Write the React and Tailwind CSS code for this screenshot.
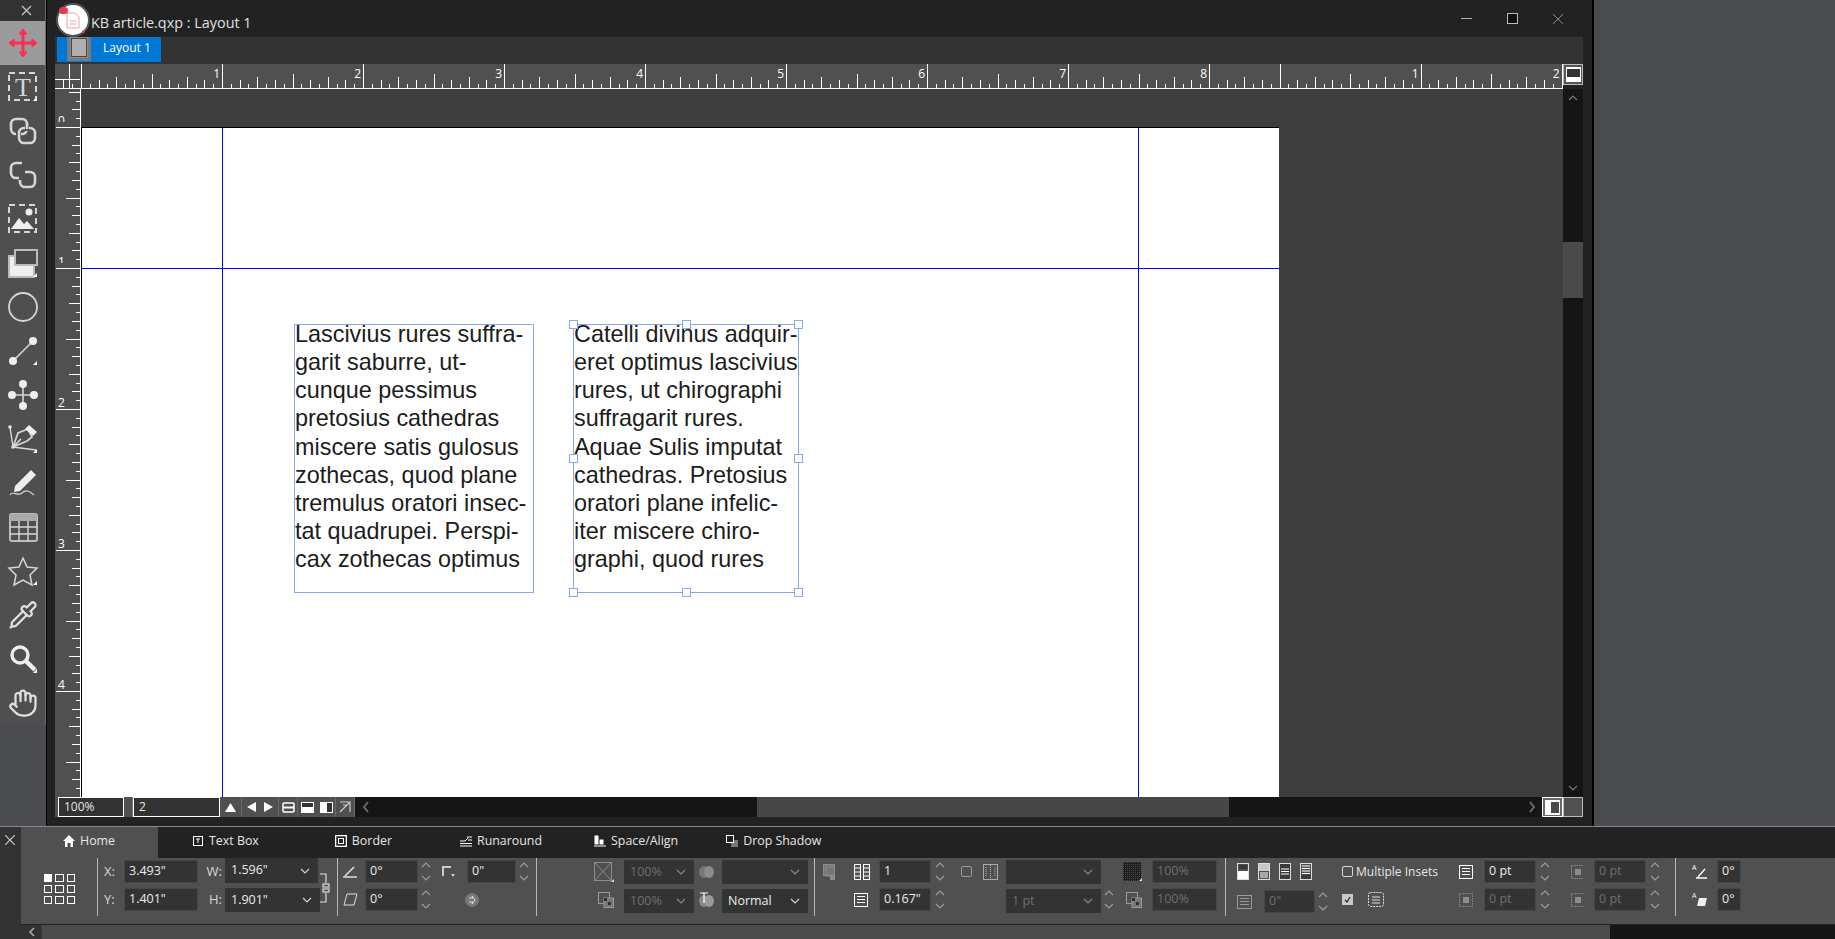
import React from 'react';
import { Hand, Pipette } from 'lucide-react';

const PX = 141;
const sub = (i) => {
    if (i % 16 === 0) return 24;
    if (i % 8 === 0) return 14;
    if (i % 4 === 0) return 11;
    if (i % 2 === 0) return 8;
    return 4;
};

const HRuler = () => {
    const ticks = [];
    for (let i = -2; i < 136; i++) ticks.push({ x: 26 + (i * PX) / 16, h: sub(i) });
    for (let i = 0; i < 36; i++) ticks.push({ x: 26 + 8.5 * PX + (i * PX) / 16, h: i === 0 ? 24 : sub(i) });
    const labels = [];
    for (let i = 1; i <= 8; i++) labels.push({ x: 26 + i * PX - 2, t: i });
    labels.push({ x: 26 + 9.5 * PX - 2, t: 1 }, { x: 26 + 10.5 * PX - 2, t: 2 });
    return (
        <svg width="1508" height="25" className="block">
            {ticks.map((t, i) => (
                <rect key={i} x={Math.round(t.x)} y={24 - t.h} width="1" height={t.h} fill="#fff" />
            ))}
            <rect x="14" y="0" width="1" height="24" fill="#fff" />
            <rect x="0" y="15" width="25" height="1" fill="#fff" />
            <rect x="0" y="24" width="1508" height="1" fill="#fff" />
            {labels.map((l, i) => (
                <text key={i} x={l.x} y="14" textAnchor="end" fontSize="12" fill="#fff" fontFamily="Open Sans, sans-serif">{l.t}</text>
            ))}
        </svg>
    );
};

const VRuler = () => {
    const ticks = [];
    for (let i = -4; i < 82; i++) ticks.push({ y: 38 + (i * PX) / 16, h: sub(i) });
    return (
        <svg width="26" height="708" className="block">
            {ticks.map((t, i) => (
                <rect key={i} x={25 - t.h} y={Math.round(t.y)} width={t.h} height="1" fill="#fff" />
            ))}
            <rect x="25" y="0" width="1" height="708" fill="#fff" />
            {[0, 1].map((n) => (
                <svg key={n} x="2" y={27 + n * PX} width="10" height="6">
                    <text x="1" y="9" fontSize="12" fill="#fff" fontFamily="Open Sans, sans-serif">{n}</text>
                </svg>
            ))}
            {[2, 3, 4].map((n) => (
                <text key={n} x="3" y={36 + n * PX} fontSize="12" fill="#fff" fontFamily="Open Sans, sans-serif">{n}</text>
            ))}
        </svg>
    );
};

const Corner = () => <polygon points="30,26 30,30 26,30" fill="#fff" stroke="none" />;

const S = ({ children }) => (
    <svg width="32" height="32" viewBox="0 0 32 32" fill="none" stroke="#d6d6d6" strokeWidth="2">{children}</svg>
);

const tools = [
    <S key="move">
        <g stroke="#ff2b55" fill="#ff2b55">
            <path d="M16 5V27M5 16H27" strokeWidth="3" />
            <path d="M16 2l4 5h-8zM16 30l4-5h-8zM2 16l5-4v8zM30 16l-5-4v8z" strokeWidth="1" />
        </g>
    </S>,
    <S key="text">
        <rect x="2" y="2" width="27" height="27" strokeDasharray="6 4" />
        <text x="16" y="25" textAnchor="middle" fontSize="26" fill="#d6d6d6" stroke="none" fontFamily="Liberation Serif, serif">T</text>
        <Corner />
    </S>,
    <S key="link">
        <g strokeWidth="2.6">
            <rect x="4" y="4" width="16" height="15" rx="5" />
            <path d="M9 19h5" stroke="#4f4f4f" strokeWidth="4" />
            <rect x="12" y="13" width="16" height="15" rx="5" />
            <path d="M20 10v6" stroke="#4f4f4f" strokeWidth="4" />
            <path d="M20 9v5" />
        </g>
    </S>,
    <S key="unlink">
        <g strokeWidth="2.6">
            <path d="M15 4H9a5 5 0 0 0-5 5v5a5 5 0 0 0 5 5h3" />
            <path d="M18 13h5a5 5 0 0 1 5 5v5a5 5 0 0 1-5 5h-5a5 5 0 0 1-5-5v-2" />
        </g>
    </S>,
    <S key="pic">
        <rect x="2" y="2" width="27" height="27" strokeDasharray="6 4" />
        <path d="M4 26l8-11 5 6 3-3 7 8z" fill="#eee" stroke="none" />
        <circle cx="22" cy="9" r="3.5" fill="#eee" stroke="none" />
    </S>,
    <S key="rect">
        <rect x="2" y="9" width="25" height="21" fill="#efefef" stroke="#bbb" />
        <rect x="8" y="3" width="22" height="15" fill="#4a4a4a" stroke="#bbb" />
        <Corner />
    </S>,
    <S key="circle">
        <circle cx="16" cy="16" r="14" strokeWidth="1.8" />
    </S>,
    <S key="line">
        <path d="M7 25L25 7" strokeWidth="1.6" />
        <circle cx="6" cy="26" r="4" fill="#eee" stroke="none" />
        <circle cx="26" cy="6" r="4" fill="#eee" stroke="none" />
        <Corner />
    </S>,
    <S key="node">
        <path d="M16 5V27M5 16H27" strokeWidth="1.6" />
        {[[16, 5], [16, 27], [5, 16], [27, 16]].map(([x, y], i) => (
            <circle key={i} cx={x} cy={y} r="4" fill="#eee" stroke="none" />
        ))}
    </S>,
    <S key="pen">
        <path d="M3 4l3 20 23 3" strokeWidth="1.4" />
        <circle cx="3" cy="4" r="1.8" fill="#eee" stroke="none" />
        <circle cx="6" cy="24" r="1.8" fill="#eee" stroke="none" />
        <path d="M6 24l5-14 10-4 4 8-5 4zM6 24l8-8" strokeWidth="1.7" />
        <path d="M22 2l8 7-4 4-8-7z" fill="#eee" stroke="none" />
        <Corner />
    </S>,
    <S key="pencil">
        <path d="M8 19L24 3l5 5-16 16-6 1z" fill="#eee" stroke="none" />
        <path d="M3 28c2-5 8 2 12-2s7-2 12 2" strokeWidth="1.2" />
    </S>,
    <S key="table">
        <rect x="3" y="3" width="27" height="27" rx="2" stroke="#bbb" />
        <rect x="3" y="3" width="27" height="7" fill="#aaa" stroke="none" />
        <path d="M3 16H30M3 23H30M12 10V30M21 10V30" strokeWidth="1.4" />
    </S>,
    <S key="star">
        <polygon points="16,3 20,12 30,13 23,20 25,30 16,25 7,30 9,20 2,13 12,12" strokeWidth="1.5" />
        <Corner />
    </S>,
    <Pipette key="pipette" size={30} color="#e0e0e0" strokeWidth={1.8} />,
    <S key="zoom">
        <circle cx="13" cy="12" r="8" strokeWidth="3.4" stroke="#eee" />
        <path d="M19 18l9 9" strokeWidth="4.5" stroke="#eee" />
        <Corner />
    </S>,
    <Hand key="hand" size={30} color="#e0e0e0" strokeWidth={1.8} />,
];

const Toolbar = () => (
    <div className="w-[46px] h-[725px] shrink-0 bg-[#4f4f4f] border-r border-[#6e6e6e] flex flex-col">
        <div className="h-[21px] bg-[#333333] flex justify-end items-center pr-[13px]">
            <svg width="11" height="11" stroke="#c8c8c8" strokeWidth="1.2"><path d="M1 1L10 10M10 1L1 10" /></svg>
        </div>
        {tools.map((t, i) => (
            <div key={i} className={`h-[44.2px] flex items-center justify-center ${i === 0 ? 'bg-[#9b9b9b]' : ''}`}>{t}</div>
        ))}
    </div>
);

const AppIcon = () => (
    <div className="absolute left-[56px] top-[3px] w-[34px] h-[34px] rounded-full bg-white border-2 border-[#555555] flex items-center justify-center">
        <svg width="14" height="17" fill="none" stroke="#f39aa8" strokeWidth="1"><path d="M1 1h8l4 4v11H1z" /><path d="M4 9h6M4 12h6" /></svg>
        <div className="absolute left-[1px] top-[2px] w-[9px] h-[7px] rounded-full bg-[#e8394f]" />
        <div className="absolute right-[3px] bottom-[2px] w-[3px] h-[3px] rounded-full bg-[#e8394f]" />
    </div>
);

const lines1 = ['Lascivius rures suffra-', 'garit saburre, ut-', 'cunque pessimus', 'pretosius cathedras', 'miscere satis gulosus', 'zothecas, quod plane', 'tremulus oratori insec-', 'tat quadrupei. Perspi-', 'cax zothecas optimus'];
const lines2 = ['Catelli divinus adquir-', 'eret optimus lascivius', 'rures, ut chirographi', 'suffragarit rures.', 'Aquae Sulis imputat', 'cathedras. Pretosius', 'oratori plane infelic-', 'iter miscere chiro-', 'graphi, quod rures'];

const TextFrame = ({ className, lines, handles }) => (
    <div className={`absolute top-[196px] h-[269px] border border-[#84a9ef] font-['Liberation_Sans',Arial,sans-serif] text-[#1c1c1c] text-[23.4px] leading-[28.15px] whitespace-nowrap ${className}`}>
        <div className="-mt-[5px]">
            {lines.map((l) => <div key={l}>{l}</div>)}
        </div>
        {handles && (
            <>
                <div className="absolute -left-[5px] -top-[5px] w-[9px] h-[9px] bg-white border border-[#84a9ef]" />
                <div className="absolute left-[108px] -top-[5px] w-[9px] h-[9px] bg-white border border-[#84a9ef]" />
                <div className="absolute -right-[5px] -top-[5px] w-[9px] h-[9px] bg-white border border-[#84a9ef]" />
                <div className="absolute -left-[5px] top-[129px] w-[9px] h-[9px] bg-white border border-[#84a9ef]" />
                <div className="absolute -right-[5px] top-[129px] w-[9px] h-[9px] bg-white border border-[#84a9ef]" />
                <div className="absolute -left-[5px] -bottom-[5px] w-[9px] h-[9px] bg-white border border-[#84a9ef]" />
                <div className="absolute left-[108px] -bottom-[5px] w-[9px] h-[9px] bg-white border border-[#84a9ef]" />
                <div className="absolute -right-[5px] -bottom-[5px] w-[9px] h-[9px] bg-white border border-[#84a9ef]" />
            </>
        )}
    </div>
);

const BarBtn = ({ children, className }) => (
    <div className={`h-[20px] bg-[#505050] flex items-center justify-center border-r border-[#6a6a6a] ${className}`}>{children}</div>
);

const BottomBar = () => (
    <div className="h-[20px] flex items-stretch">
        <div className="w-[3px] bg-[#505050]" />
        <div className="w-[66px] bg-[#333333] border border-white text-[#e8e8e8] text-[12px] leading-[18px] pl-[5px]">100%</div>
        <div className="w-[9px] bg-[#505050] border-r border-[#777]" />
        <div className="w-[87px] bg-[#333333] border border-white text-[#e8e8e8] text-[12px] leading-[18px] pl-[5px]">2</div>
        <BarBtn className="w-[22px]"><svg width="11" height="10" fill="#fff"><path d="M5.5 1L11 10H0z" /></svg></BarBtn>
        <BarBtn className="w-[37px] gap-[8px]">
            <svg width="9" height="10" fill="#fff"><path d="M0 5L9 0v10z" /></svg>
            <svg width="9" height="10" fill="#fff"><path d="M9 5L0 0v10z" /></svg>
        </BarBtn>
        <BarBtn className="w-[19px]">
            <svg width="13" height="11" fill="none" stroke="#fff" strokeWidth="1.5"><rect x="1" y="1" width="11" height="9" rx="1" /><path d="M1 5.5H12" strokeWidth="2" /></svg>
        </BarBtn>
        <BarBtn className="w-[38px] gap-[6px]">
            <svg width="13" height="11"><rect x="0.5" y="0.5" width="12" height="10" fill="#333" stroke="#fff" /><rect y="5" width="13" height="6" fill="#fff" /></svg>
            <svg width="13" height="11"><rect x="0.5" y="0.5" width="12" height="10" fill="#333" stroke="#fff" /><rect width="7" height="11" fill="#fff" /></svg>
        </BarBtn>
        <BarBtn className="w-[19px]">
            <svg width="12" height="12" fill="none" stroke="#ccc" strokeWidth="1.2"><path d="M1 1H11V11M11 1L1 11M4 4H8" /></svg>
        </BarBtn>
        <div className="w-[22px] bg-[#151515] flex items-center justify-center">
            <svg width="8" height="12" fill="none" stroke="#6a6a6a" strokeWidth="2"><path d="M6 1L2 6l4 5" /></svg>
        </div>
        <div className="w-[380px] bg-[#151515]" />
        <div className="w-[472px] bg-[#474747]" />
        <div className="flex-1 bg-[#151515] flex items-center justify-end pr-[6px]">
            <svg width="8" height="12" fill="none" stroke="#6a6a6a" strokeWidth="2"><path d="M2 1L6 6l-4 5" /></svg>
        </div>
        <div className="w-[21px] bg-[#6a6a6a] border border-white flex items-center justify-center">
            <svg width="15" height="15"><rect width="15" height="15" fill="#fff" /><rect x="6" y="2" width="8" height="11" fill="#4a4a4a" /></svg>
        </div>
        <div className="w-[20px] bg-[#505050] border border-[#bbb]" />
    </div>
);

const Chev = ({ up, color = '#9c9c9c', w = 10 }) => (
    <svg width={w} height="6" fill="none" stroke={color} strokeWidth="1.2">
        <path d={up ? `M1 5L${w / 2} 1L${w - 1} 5` : `M1 1L${w / 2} 5L${w - 1} 1`} />
    </svg>
);

const Field = ({ w, v, off }) => (
    <div className={`${w} h-[23px] bg-[#333333] border border-[#474747] px-[4px] leading-[20px] text-[12.5px] truncate ${off ? 'text-[#6f6f6f]' : 'text-[#ececec]'}`}>{v}</div>
);

const Drop = ({ w, v, off, className = 'h-[24px]' }) => (
    <div className={`${w} ${className} bg-[#333333] pl-[6px] pr-[8px] flex items-center justify-between text-[12.5px] ${off ? 'text-[#6f6f6f]' : 'text-[#ececec]'}`}>
        <span>{v}</span>
        <Chev color={off ? '#888' : '#d0d0d0'} />
    </div>
);

const Spin = () => (
    <div className="h-[23px] flex flex-col justify-between items-center py-[2px]">
        <Chev up />
        <Chev />
    </div>
);

const Divider = ({ ml }) => <div className={`w-px h-[58px] -mt-[2px] bg-[#b8b8b8] shrink-0 ${ml}`} />;

const Col = ({ className, children }) => (
    <div className={`flex flex-col gap-[5px] shrink-0 ${className}`}>{children}</div>
);

const Cell = ({ children, className = '' }) => (
    <div className={`h-[23px] flex items-center ${className}`}>{children}</div>
);

const Doc = ({ stroke = '#ddd', w = 15, h = 15, children }) => (
    <svg width={w} height={h} fill="none" stroke={stroke} strokeWidth="1">{children}</svg>
);

const Overlap = () => (
    <Doc w={16} h={16} stroke="#999">
        <rect x="0.5" y="0.5" width="11" height="11" />
        <rect x="6" y="6" width="9.5" height="9.5" fill="#777" />
        <rect x="6" y="6" width="3" height="3" fill="#333" stroke="none" />
        <rect x="10" y="10" width="3" height="3" fill="#333" stroke="none" />
    </Doc>
);

const InsetIcon = ({ c = '#8c8c8c' }) => (
    <Doc w={14} h={14} stroke={c}>
        <rect x="0.5" y="0.5" width="13" height="13" strokeDasharray="1.5 1" />
        <rect x="4" y="4" width="6" height="6" fill={c} stroke="none" />
    </Doc>
);

const Lines = ({ c = '#fff', w = 14 }) => (
    <Doc w={w} h={14} stroke={c}>
        <rect x="0.5" y="0.5" width={w - 1} height="13" />
        <path d={`M3 3.5H${w - 3}M3 6.5H${w - 3}M3 9.5H${w - 3}`} />
    </Doc>
);

// top, centre, bottom, justified vertical alignment
const vAlign = [
    <><path d="M2 3H10M2 5H10" stroke="#222" /><rect x="1" y="8" width="10" height="8" fill="#fff" stroke="none" /></>,
    <><rect x="1" y="1" width="10" height="7" fill="#c8c8c8" stroke="none" /><path d="M2 10H10M2 12H10M2 14H10" stroke="#fff" /></>,
    <><rect x="1" y="1" width="10" height="15" fill="#3a3a3a" stroke="none" /><path d="M2 6H10M2 8.5H10M2 11H10" stroke="#fff" /></>,
    <><rect x="1" y="12" width="10" height="4" fill="#3a3a3a" stroke="none" /><path d="M2 3H10M2 5.5H10M2 8H10M2 10.5H10" stroke="#fff" /></>,
];

const tabs = [
    { ml: 'ml-[34px]', l: 'Text Box', i: <><rect x="1.5" y="1.5" width="9" height="9" /><path d="M4 4H8M6 4V8" /></> },
    { ml: 'ml-[76px]', l: 'Border', i: <><rect x="0.5" y="0.5" width="11" height="11" strokeWidth="1.6" /><rect x="3.5" y="3.5" width="5" height="5" /></> },
    { ml: 'ml-[68px]', l: 'Runaround', i: <path d="M0 11H12M0 8.5H12M0 6H5l3-3M7 2h5M8 5h4" /> },
    { ml: 'ml-[52px]', l: 'Space/Align', i: <><rect x="1" y="1" width="3" height="8" fill="#fff" /><rect x="6" y="5" width="3" height="4" fill="#fff" /><path d="M0 11H12" /></> },
    { ml: 'ml-[48px]', l: 'Drop Shadow', i: <><rect x="5" y="5" width="7" height="7" fill="#777" stroke="none" /><rect x="0.5" y="0.5" width="7" height="7" fill="#222" /></> },
];

const Panel = () => (
    <div className="h-[113px] flex font-['Open_Sans',sans-serif] text-[12px]">
        <div className="w-[21px] bg-[#333333] border-t border-[#888] flex flex-col">
            <div className="pl-[5px] pt-[8px]">
                <svg width="10" height="10" stroke="#c8c8c8" strokeWidth="1.2"><path d="M0 0L10 10M10 0L0 10" /></svg>
            </div>
        </div>
        <div className="flex-1 flex flex-col border-t border-[#888] min-w-0">
            <div className="h-[31px] bg-[#222222] flex items-center text-[#e6e6e6] text-[12.4px]">
                <div className="w-[137px] h-full bg-[#505050] flex items-center gap-[5px] pl-[42px] pb-[3px]">
                    <svg width="12" height="12" fill="#fff"><path d="M6 0l6 6h-2v6H7.5V8h-3v4H2V6H0z" /></svg>
                    Home
                </div>
                {tabs.map((t) => (
                    <div key={t.l} className={`flex items-center gap-[5px] pb-[3px] ${t.ml}`}>
                        <svg width="12" height="12" fill="none" stroke="#fff" strokeWidth="1">{t.i}</svg>
                        {t.l}
                    </div>
                ))}
            </div>
            <div className="h-[67px] bg-[#505050] border-b border-[#222222] flex items-start pt-[2px]">
                <div className="ml-[23px] w-[31px] mt-[14px] shrink-0 grid grid-cols-3 gap-[3px]">
                    {[0, 1, 2, 3, 4, 5, 6, 7, 8].map((i) => (
                        <div key={i} className={`h-[8px] border border-white ${i === 0 ? 'bg-white' : ''}`} />
                    ))}
                </div>
                <Divider ml="ml-[22px]" />
                <Col className="ml-[6px] w-[20px] text-[#d8d8d8] text-[13px]">
                    <Cell>X:</Cell>
                    <Cell>Y:</Cell>
                </Col>
                <Col className="w-[74px]">
                    <Field w="w-[74px]" v={'3.493"'} />
                    <Field w="w-[74px]" v={'1.401"'} />
                </Col>
                <Col className="w-[27px] text-[#d8d8d8] text-[13px] items-end pr-[3px]">
                    <Cell>W:</Cell>
                    <Cell>H:</Cell>
                </Col>
                <Col className="w-[95px]">
                    <Drop w="w-[93px] -mt-[2px]" className="h-[25px]" v={'1.596"'} />
                    <Drop w="w-[95px]" className="h-[24px]" v={'1.901"'} />
                </Col>
                <svg width="10" height="30" className="shrink-0 mt-[13px]" fill="none" stroke="#ddd" strokeWidth="1.2">
                    <path d="M0 1H6V10M6 20V29H0" />
                    <rect x="3" y="11" width="6" height="3" />
                    <rect x="3" y="16" width="6" height="3" />
                </svg>
                <Divider ml="ml-[7px]" />
                <Col className="ml-[5px] w-[22px]">
                    <Cell>
                        <svg width="15" height="12" fill="none" stroke="#ddd" strokeWidth="1.6"><path d="M0 11H14M2 10L11 1" /></svg>
                    </Cell>
                    <Cell>
                        <svg width="15" height="13" fill="none" stroke="#ddd" strokeWidth="1"><path d="M4 1H14L11 12H1z" /></svg>
                    </Cell>
                </Col>
                <Col className="w-[53px]">
                    <Field w="w-[53px]" v="0°" />
                    <Field w="w-[53px]" v="0°" />
                </Col>
                <Col className="ml-[3px] w-[10px]">
                    <Spin />
                    <Spin />
                </Col>
                <Col className="w-[36px]">
                    <Cell className="pl-[11px]">
                        <svg width="13" height="13" fill="none" stroke="#ccc" strokeWidth="2"><path d="M1 11V2H9" /><path d="M9 9h4l-2 3z" fill="#ccc" stroke="none" /></svg>
                    </Cell>
                    <div />
                </Col>
                <Col className="w-[49px]">
                    <Field w="w-[49px]" v={'0"'} />
                    <Cell>
                        <svg width="14" height="14" className="-ml-[2px]" fill="#777" stroke="#ddd" strokeWidth="1"><circle cx="7" cy="7" r="6.5" stroke="#777" /><path d="M4 5h4l-1-2 3 4-3 4 1-2H4" fill="none" /></svg>
                    </Cell>
                </Col>
                <Col className="ml-[3px] w-[10px]">
                    <Spin />
                </Col>
                <Divider ml="ml-[7px]" />
                <Col className="ml-[57px] w-[20px]">
                    <Cell>
                        <svg width="20" height="20" fill="none" stroke="#8c8c8c"><rect x="0.5" y="0.5" width="17" height="18" /><path d="M1 1L17 18M17 1L1 18" /><path d="M20 17v3h-3z" fill="#ddd" stroke="none" /></svg>
                    </Cell>
                    <Cell className="pl-[4px]"><Overlap /></Cell>
                </Col>
                <Col className="ml-[10px] w-[70px]">
                    <Drop w="w-[70px]" v="100%" off />
                    <Drop w="w-[70px]" v="100%" off />
                </Col>
                <Col className="ml-[5px] w-[20px]">
                    <Cell>
                        <svg width="15" height="12"><ellipse cx="5" cy="6" rx="5" ry="6" fill="#777" /><ellipse cx="10" cy="6" rx="5" ry="6" fill="#8c8c8c" /></svg>
                    </Cell>
                    <Cell>
                        <svg width="15" height="15"><ellipse cx="5" cy="9" rx="5" ry="6" fill="#888" /><ellipse cx="10" cy="9" rx="5" ry="6" fill="#9a9a9a" /><path d="M1 1H9M5 1V11" stroke="#fff" strokeWidth="1.2" /></svg>
                    </Cell>
                </Col>
                <Col className="ml-[3px] w-[86px]">
                    <Drop w="w-[86px]" v="" off />
                    <Drop w="w-[86px]" v="Normal" />
                </Col>
                <Divider ml="ml-[6px]" />
                <Col className="ml-[8px] w-[12px]">
                    <Cell>
                        <svg width="12" height="16" fill="none" stroke="#8c8c8c"><rect x="0.5" y="0.5" width="11" height="11" fill="#777" /><rect x="3" y="3" width="9" height="9" /><rect x="7" y="11" width="5" height="5" fill="#8c8c8c" stroke="none" /></svg>
                    </Cell>
                    <div />
                </Col>
                <Col className="ml-[19px] w-[16px]">
                    <Cell>
                        <svg width="16" height="16" fill="none" stroke="#fff"><rect x="0.5" y="0.5" width="6" height="15" /><rect x="9.5" y="0.5" width="6" height="15" /><path d="M1 4H6M1 8H6M1 12H6M10 4H15M10 8H15M10 12H15" /></svg>
                    </Cell>
                    <Cell><Lines /></Cell>
                </Col>
                <Col className="ml-[9px] w-[52px]">
                    <Field w="w-[52px]" v="1" />
                    <Field w="w-[52px]" v={'0.167"'} />
                </Col>
                <Col className="ml-[3px] w-[11px]">
                    <Spin />
                    <Spin />
                </Col>
                <Col className="ml-[16px] w-[11px]">
                    <Cell><div className="w-[11px] h-[11px] rounded-[2px] border border-[#9a9a9a]" /></Cell>
                    <div />
                </Col>
                <Col className="ml-[11px] w-[15px]">
                    <Cell>
                        <svg width="15" height="16" fill="none" stroke="#aaa"><rect x="0.5" y="0.5" width="14" height="15" /><path d="M7.5 1V15" strokeDasharray="1 1" /><path d="M3 3V13M12 3V13" strokeDasharray="1 1" /></svg>
                    </Cell>
                    <div />
                </Col>
                <Col className="ml-[8px] w-[95px]">
                    <Drop w="w-[95px]" v="" off />
                    <Drop w="w-[95px]" v="1 pt" off />
                </Col>
                <Col className="ml-[3px] w-[10px]">
                    <div className="h-[23px]" />
                    <Spin />
                </Col>
                <Col className="ml-[9px] w-[19px]">
                    <Cell>
                        <svg width="19" height="19">
                            <defs>
                                <pattern id="dots" width="2" height="2" patternUnits="userSpaceOnUse">
                                    <rect width="2" height="2" fill="#1e1e1e" />
                                    <rect width="1" height="1" fill="#4a4a4a" />
                                </pattern>
                            </defs>
                            <rect width="18" height="19" fill="url(#dots)" />
                            <path d="M19 16v3h-3z" fill="#ddd" />
                        </svg>
                    </Cell>
                    <Cell className="pl-[3px]"><Overlap /></Cell>
                </Col>
                <Col className="ml-[10px] w-[65px]">
                    <Field w="w-[65px]" v="100%" off />
                    <Field w="w-[65px]" v="100%" off />
                </Col>
                <Divider ml="ml-[8px]" />
                <Col className="ml-[11px] w-[92px]">
                    <Cell className="gap-[9px]">
                        {vAlign.map((v, i) => (
                            <svg key={i} width="12" height="17" fill="none" stroke="#ddd" strokeWidth="1">
                                {v}
                                <rect x="0.5" y="0.5" width="11" height="16" />
                            </svg>
                        ))}
                    </Cell>
                    <div className="h-[23px] flex items-center mt-[2px]">
                        <Lines c="#9a9a9a" w={15} />
                        <div className="ml-[12px]"><Field w="w-[51px]" v={'0"'} off /></div>
                        <div className="ml-[3px] w-[10px]"><Spin /></div>
                    </div>
                </Col>
                <Col className="ml-[13px] w-[97px]">
                    <Cell className="gap-[3px] text-[#e6e6e6] whitespace-nowrap">
                        <div className="w-[11px] h-[11px] rounded-[2px] border border-[#d8d8d8]" />
                        Multiple Insets
                    </Cell>
                    <Cell className="gap-[15px]">
                        <div className="w-[11px] h-[11px] bg-[#c8c8c8] flex items-center justify-center">
                            <svg width="7" height="7" fill="none" stroke="#333" strokeWidth="1.4"><path d="M1 4l2 2 3-5" /></svg>
                        </div>
                        <svg width="16" height="15" fill="none" stroke="#ddd"><rect x="0.5" y="0.5" width="15" height="14" rx="2" strokeDasharray="2 1" /><path d="M4 5H12M4 8H12M4 11H12" /></svg>
                    </Cell>
                </Col>
                <Col className="ml-[20px] w-[14px]">
                    <Cell><Lines /></Cell>
                    <Cell><InsetIcon /></Cell>
                </Col>
                <Col className="ml-[11px] w-[52px]">
                    <Field w="w-[52px]" v="0 pt" />
                    <Field w="w-[52px]" v="0 pt" off />
                </Col>
                <Col className="ml-[3px] w-[11px]">
                    <Spin />
                    <Spin />
                </Col>
                <Col className="ml-[21px] w-[13px]">
                    <Cell><InsetIcon /></Cell>
                    <Cell><InsetIcon /></Cell>
                </Col>
                <Col className="ml-[10px] w-[52px]">
                    <Field w="w-[52px]" v="0 pt" off />
                    <Field w="w-[52px]" v="0 pt" off />
                </Col>
                <Col className="ml-[3px] w-[11px]">
                    <Spin />
                    <Spin />
                </Col>
                <Divider ml="ml-[15px]" />
                <Col className="ml-[16px] w-[15px]">
                    <Cell>
                        <svg width="16" height="15" fill="none" stroke="#fff" strokeWidth="1.4"><text x="0" y="6" fontSize="7" fill="#fff" stroke="none">A</text><path d="M4 14H15M6 13L13 5" /></svg>
                    </Cell>
                    <Cell>
                        <svg width="16" height="15" fill="#eee"><text x="0" y="6" fontSize="7" stroke="none">A</text><path d="M7 6h8l-2 8H5z" /></svg>
                    </Cell>
                </Col>
                <Col className="ml-[10px] w-[24px]">
                    <Field w="w-[24px]" v="0°" />
                    <Field w="w-[24px]" v="0°" />
                </Col>
            </div>
            <div className="h-[14px] flex">
                <div className="w-[21px] bg-[#333333] flex items-center justify-center">
                    <svg width="7" height="10" fill="none" stroke="#aaa" strokeWidth="1.6"><path d="M6 1L2 5l4 4" /></svg>
                </div>
                <div className="w-[1568px] bg-[#4c4c4c]" />
                <div className="flex-1 bg-[#151515]" />
            </div>
        </div>
    </div>
);

const App = () => {
    return (
        <div className="relative w-[1835px] h-[939px] overflow-hidden bg-[#4b4c50] font-['Open_Sans',sans-serif]">
            <div className="flex h-[826px]">
                <Toolbar />
                <div className="w-[1548px] shrink-0 h-full bg-[#222222] border-l border-r-2 border-black flex flex-col">
                    <div className="h-[37px] flex items-center justify-between">
                        <div className="pl-[44px] text-[14.4px] text-[#e0e0e0] pt-[8px]">KB article.qxp : Layout 1</div>
                        <div className="flex items-center pr-[29px] gap-[35px]">
                            <svg width="11" height="11" stroke="#b0b0b0"><path d="M0 5.5H11" /></svg>
                            <svg width="11" height="11" fill="#111" stroke="#bbb"><rect x="0.5" y="0.5" width="10" height="10" /></svg>
                            <svg width="10" height="10" stroke="#8a8a8a"><path d="M0 0L10 10M10 0L0 10" /></svg>
                        </div>
                    </div>
                    <div className="flex-1 flex flex-col pl-[8px] pr-[9px]">
                        <div className="h-[27px] bg-[#333333] pl-[2px] shrink-0">
                            <div className="w-[104px] h-[25px] bg-[#0078d7] relative text-white text-[12px] leading-[21px] pl-[46px]">
                                Layout 1
                                <div className="absolute left-[10px] top-0 w-[24px] h-[24px] bg-[#8e8e8e] border-[3px] border-t-0 border-[#7a7a7a] p-[1px]">
                                    <div className="w-full h-full bg-[#b0b0b0] border border-[#444444]" />
                                </div>
                            </div>
                        </div>
                        <div className="h-[25px] flex shrink-0">
                            <div className="w-[1508px] bg-[#505050]"><HRuler /></div>
                            <div className="w-[20px] h-[21px] bg-[#555] border border-[#bbb] flex items-center justify-center">
                                <svg width="15" height="15"><rect width="15" height="15" fill="#fff" /><rect x="1" y="2" width="13" height="8" fill="#333" /></svg>
                            </div>
                        </div>
                        <div className="h-[708px] flex shrink-0">
                            <div className="w-[26px] bg-[#505050] shrink-0"><VRuler /></div>
                            <div className="w-[1482px] bg-[#3e3e3e] pt-[38px] overflow-hidden">
                                <div className="relative w-[1198px] h-[670px] bg-white border-l border-t border-black">
                                    <div className="absolute left-[140px] top-0 bottom-0 w-px bg-[#0000ff]" />
                                    <div className="absolute left-[1056px] top-0 bottom-0 w-px bg-[#0000ff]" />
                                    <div className="absolute left-0 right-0 top-[140px] h-px bg-[#0000ff]" />
                                    <TextFrame className="left-[212px] w-[240px]" lines={lines1} />
                                    <TextFrame className="left-[491px] w-[226px]" lines={lines2} handles />
                                </div>
                            </div>
                            <div className="w-[20px] bg-[#151515] flex flex-col items-center pt-[6px]">
                                <Chev up color="#777" />
                                <div className="w-full h-[56px] mt-[141px] bg-[#4a4a4a]" />
                                <div className="mt-auto mb-[6px]"><Chev color="#777" /></div>
                            </div>
                        </div>
                        <BottomBar />
                    </div>
                </div>
            </div>
            <AppIcon />
            <Panel />
        </div>
    );
};

export default App;
